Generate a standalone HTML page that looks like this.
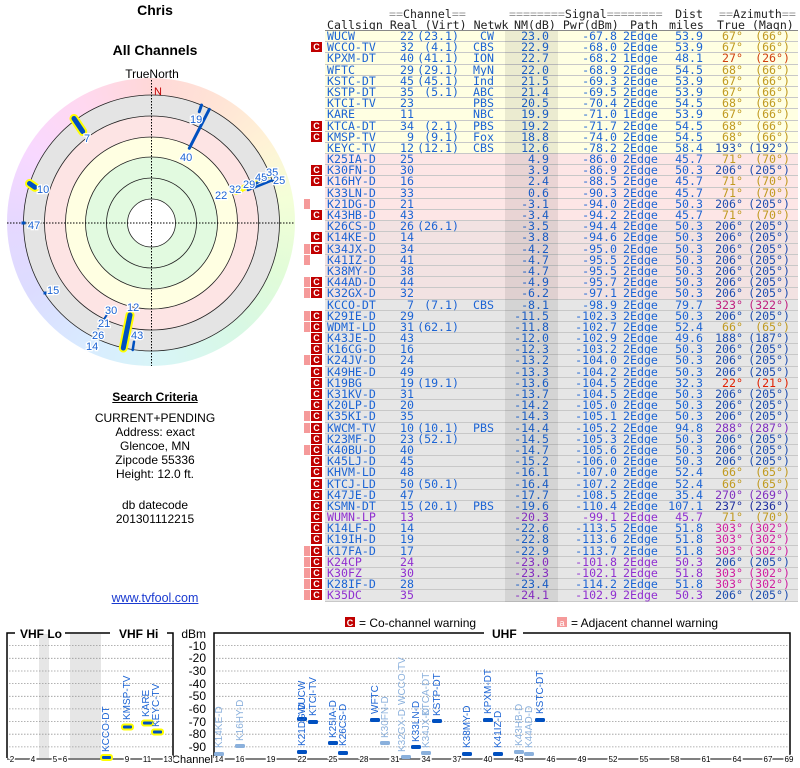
<!DOCTYPE html>
<html><head><meta charset="utf-8">
<style>
body{margin:0;width:800px;height:768px;background:#fff;position:relative;overflow:hidden;font-family:"Liberation Sans","DejaVu Sans",sans-serif}
.lt{position:absolute;left:0;width:310px;text-align:center;color:#000}
#tb{position:absolute;left:325px;top:31px;width:473px;font-family:"DejaVu Sans Mono","Liberation Mono",monospace;font-size:11.6px;color:#1c64d4}
.r{position:relative;height:11.2px;box-sizing:border-box;border-bottom:1px solid #c8c8c8;line-height:11px;white-space:pre}
.r span{position:absolute;top:0}
.Y{background:#ffffe2}.P{background:#fde6e6}.Q{background:#f2e2e2}.G{background:#e6e6e6}
.a{left:2px}.b{left:41px;width:48px;text-align:right}.v{left:90px;width:44px;text-align:right}
.n{left:140px;width:29px;text-align:right}.m{left:170px;width:54px;text-align:right}
.p{left:232px;width:60px;text-align:right}.h{left:298px}.d{left:334px;width:44px;text-align:right}
.t{left:384px;width:34px;text-align:right}.g2{left:420px;width:45px;text-align:right}
.C{position:absolute;left:-14px;top:0px;width:11px;height:10px;background:#c00000;color:#fff;font:bold 9px/10px "Liberation Sans",sans-serif;text-align:center}
.A{position:absolute;left:-21px;top:0px;width:6px;height:10px;background:#f59a9a;overflow:hidden}
.go{color:#c09a20}.rd{color:#d04010}.nb{color:#1f4fb0}.mg{color:#c0207f}.pu{color:#8030c0}.nv{color:#2030a0}.pk{color:#d020a0}.rr{color:#e02000}.vi{color:#9030d0}
#hd{position:absolute;left:325px;top:9px;font-family:"DejaVu Sans Mono","Liberation Mono",monospace;font-size:11.6px;color:#222;white-space:pre;line-height:11px}
#hd span{position:absolute}
.e{color:#999}
</style></head><body>

<div class="lt" style="top:2px;font-weight:bold;font-size:14px">Chris</div>
<div class="lt" style="top:42px;font-weight:bold;font-size:14px">All Channels</div>
<div class="lt" style="top:67px;font-size:12px;left:-3px">TrueNorth</div>

<div style="position:absolute;left:7px;top:78px;width:288px;height:288px;border-radius:50%;background:conic-gradient(#ffd8d8 0deg,#ffe4d6 30deg,#fff2d6 55deg,#f4ffd8 80deg,#e2fcd8 110deg,#d8f8e4 140deg,#d8f6f6 175deg,#d8ecff 205deg,#dcdcff 240deg,#e6d8ff 270deg,#f8d8ff 300deg,#ffd8f0 330deg,#ffd8d8 360deg)"></div>
<svg style="position:absolute;left:0;top:0" width="310" height="380">
<circle cx="151.5" cy="223" r="128" fill="#e4e4e4" stroke="#222" stroke-width="0.8"/>
<circle cx="151.5" cy="223" r="107" fill="#fde4e4" stroke="#222" stroke-width="0.8"/>
<circle cx="151.5" cy="223" r="86" fill="#ffffe2" stroke="#222" stroke-width="0.8"/>
<circle cx="151.5" cy="223" r="66" fill="#e2fae0" stroke="#222" stroke-width="0.8"/>
<circle cx="151.5" cy="223" r="45" fill="#e2fae0" stroke="#222" stroke-width="0.8"/>
<circle cx="151.5" cy="223" r="24" fill="#fff" stroke="#222" stroke-width="0.8"/>
<line x1="7" y1="223" x2="295" y2="223" stroke="#000" stroke-width="1" stroke-dasharray="1.5,1.5"/>
<line x1="151.5" y1="80" x2="151.5" y2="366" stroke="#000" stroke-width="1" stroke-dasharray="1.5,1.5"/>
<text x="158" y="95" font-size="11" fill="#c00000" text-anchor="middle">N</text>
<g stroke-linecap="round">
<line x1="74" y1="118.5" x2="82.7" y2="131.5" stroke="#ff0" stroke-width="9"/>
<line x1="74" y1="118.5" x2="82.7" y2="131.5" stroke="#0050c0" stroke-width="5"/>
<line x1="29.5" y1="183.5" x2="35" y2="187.3" stroke="#ff0" stroke-width="9"/>
<line x1="29.5" y1="183.5" x2="35" y2="187.3" stroke="#0050c0" stroke-width="5"/>
<line x1="130" y1="315" x2="123.3" y2="348" stroke="#ff0" stroke-width="9"/>
<line x1="130" y1="315" x2="123.3" y2="348" stroke="#0050c0" stroke-width="5"/>
<line x1="236" y1="192" x2="270" y2="174" stroke="#ff0" stroke-width="6"/>
<line x1="248" y1="190" x2="273" y2="180" stroke="#0050c0" stroke-width="2.5"/>
<line x1="255" y1="184" x2="272" y2="174" stroke="#0050c0" stroke-width="2.5"/>
<line x1="189.3" y1="148.3" x2="209.3" y2="109.3" stroke="#0050c0" stroke-width="3"/>
<line x1="199.3" y1="111.7" x2="201.5" y2="105" stroke="#0050c0" stroke-width="3"/>
<line x1="134" y1="341.7" x2="132.7" y2="350" stroke="#0050c0" stroke-width="2.5"/>
<line x1="106.7" y1="315" x2="98.3" y2="328.3" stroke="#0050c0" stroke-width="2"/>
<rect x="21.5" y="221.5" width="4" height="3" fill="#0050c0"/>
<rect x="43.5" y="291.5" width="3" height="3" fill="#0050c0"/>
</g>
<g font-size="11" fill="#1c64d4" stroke="#fff" stroke-width="2.5" paint-order="stroke">
<text x="190" y="123">19</text><text x="180" y="161">40</text><text x="84" y="142">7</text>
<text x="37" y="193">10</text><text x="28" y="229">47</text><text x="47" y="294">15</text>
<text x="215" y="199">22</text><text x="229" y="193">32</text><text x="243" y="188">29</text>
<text x="255" y="181">45</text><text x="266" y="176">35</text><text x="273" y="184">25</text>
<text x="127" y="311">12</text><text x="131" y="339">43</text><text x="105" y="314">30</text>
<text x="98" y="327">21</text><text x="92" y="339">26</text><text x="86" y="350">14</text>
</g>
</svg>

<div class="lt" style="top:390px;font-weight:bold;font-size:12px;text-decoration:underline">Search Criteria</div>
<div class="lt" style="top:411px;font-size:12px;line-height:14px">CURRENT+PENDING<br>Address: exact<br>Glencoe, MN<br>Zipcode 55336<br>Height: 12.0 ft.</div>
<div class="lt" style="top:498px;font-size:12px;line-height:14px">db datecode<br>201301112215</div>
<div class="lt" style="top:591px;font-size:12.5px;color:#1a3ad0;text-decoration:underline">www.tvfool.com</div>

<div id="hd">
<span style="left:64px;top:0"><i class="e" style="font-style:normal">==</i>Channel<i class="e" style="font-style:normal">==</i></span>
<span style="left:184px;top:0"><i class="e" style="font-style:normal">========</i>Signal<i class="e" style="font-style:normal">========</i></span>
<span style="left:344px;top:0;width:34px;text-align:right">Dist</span>
<span style="left:394px;top:0"><i class="e" style="font-style:normal">==</i>Azimuth<i class="e" style="font-style:normal">==</i></span>
<span style="left:2px;top:11px">Callsign Real (Virt) Netwk</span>
<span style="left:189px;top:11px">NM(dB) Pwr(dBm)</span>
<span style="left:305px;top:11px">Path</span>
<span style="left:344px;top:11px">miles</span>
<span style="left:392px;top:11px">True (Magn)</span>
</div>
<div style="position:absolute;left:325px;top:30px;width:473px;height:1px;background:#888"></div>
<div style="position:absolute;left:505px;top:31px;width:53px;height:571px;background:rgba(0,0,0,0.08);z-index:2"></div>

<div id="tb">
<div class="r Y"><span class="a">WUCW</span><span class="b">22</span><span class="v">(23.1)</span><span class="n">CW</span><span class="m">23.0</span><span class="p">-67.8</span><span class="h">2Edge</span><span class="d">53.9</span><span class="t go">67°</span><span class="g2 go">(66°)</span></div>
<div class="r Y"><i class="C">C</i><span class="a">WCCO-TV</span><span class="b">32</span><span class="v">(4.1)</span><span class="n">CBS</span><span class="m">22.9</span><span class="p">-68.0</span><span class="h">2Edge</span><span class="d">53.9</span><span class="t go">67°</span><span class="g2 go">(66°)</span></div>
<div class="r Y"><span class="a">KPXM-DT</span><span class="b">40</span><span class="v">(41.1)</span><span class="n">ION</span><span class="m">22.7</span><span class="p">-68.2</span><span class="h">1Edge</span><span class="d">48.1</span><span class="t rd">27°</span><span class="g2 rd">(26°)</span></div>
<div class="r Y"><span class="a">WFTC</span><span class="b">29</span><span class="v">(29.1)</span><span class="n">MyN</span><span class="m">22.0</span><span class="p">-68.9</span><span class="h">2Edge</span><span class="d">54.5</span><span class="t go">68°</span><span class="g2 go">(66°)</span></div>
<div class="r Y"><span class="a">KSTC-DT</span><span class="b">45</span><span class="v">(45.1)</span><span class="n">Ind</span><span class="m">21.5</span><span class="p">-69.3</span><span class="h">2Edge</span><span class="d">53.9</span><span class="t go">67°</span><span class="g2 go">(66°)</span></div>
<div class="r Y"><span class="a">KSTP-DT</span><span class="b">35</span><span class="v">(5.1)</span><span class="n">ABC</span><span class="m">21.4</span><span class="p">-69.5</span><span class="h">2Edge</span><span class="d">53.9</span><span class="t go">67°</span><span class="g2 go">(66°)</span></div>
<div class="r Y"><span class="a">KTCI-TV</span><span class="b">23</span><span class="n">PBS</span><span class="m">20.5</span><span class="p">-70.4</span><span class="h">2Edge</span><span class="d">54.5</span><span class="t go">68°</span><span class="g2 go">(66°)</span></div>
<div class="r Y"><span class="a">KARE</span><span class="b">11</span><span class="n">NBC</span><span class="m">19.9</span><span class="p">-71.0</span><span class="h">1Edge</span><span class="d">53.9</span><span class="t go">67°</span><span class="g2 go">(66°)</span></div>
<div class="r Y"><i class="C">C</i><span class="a">KTCA-DT</span><span class="b">34</span><span class="v">(2.1)</span><span class="n">PBS</span><span class="m">19.2</span><span class="p">-71.7</span><span class="h">2Edge</span><span class="d">54.5</span><span class="t go">68°</span><span class="g2 go">(66°)</span></div>
<div class="r Y"><i class="C">C</i><span class="a">KMSP-TV</span><span class="b">9</span><span class="v">(9.1)</span><span class="n">Fox</span><span class="m">18.8</span><span class="p">-74.0</span><span class="h">2Edge</span><span class="d">54.5</span><span class="t go">68°</span><span class="g2 go">(66°)</span></div>
<div class="r Y"><span class="a">KEYC-TV</span><span class="b">12</span><span class="v">(12.1)</span><span class="n">CBS</span><span class="m">12.6</span><span class="p">-78.2</span><span class="h">2Edge</span><span class="d">58.4</span><span class="t nb">193°</span><span class="g2 nb">(192°)</span></div>
<div class="r P"><span class="a">K25IA-D</span><span class="b">25</span><span class="m">4.9</span><span class="p">-86.0</span><span class="h">2Edge</span><span class="d">45.7</span><span class="t go">71°</span><span class="g2 go">(70°)</span></div>
<div class="r P"><i class="C">C</i><span class="a">K30FN-D</span><span class="b">30</span><span class="m">3.9</span><span class="p">-86.9</span><span class="h">2Edge</span><span class="d">50.3</span><span class="t nb">206°</span><span class="g2 nb">(205°)</span></div>
<div class="r P"><i class="C">C</i><span class="a">K16HY-D</span><span class="b">16</span><span class="m">2.4</span><span class="p">-88.5</span><span class="h">2Edge</span><span class="d">45.7</span><span class="t go">71°</span><span class="g2 go">(70°)</span></div>
<div class="r P"><span class="a">K33LN-D</span><span class="b">33</span><span class="m">0.6</span><span class="p">-90.3</span><span class="h">2Edge</span><span class="d">45.7</span><span class="t go">71°</span><span class="g2 go">(70°)</span></div>
<div class="r P"><i class="A"></i><span class="a">K21DG-D</span><span class="b">21</span><span class="m">-3.1</span><span class="p">-94.0</span><span class="h">2Edge</span><span class="d">50.3</span><span class="t nb">206°</span><span class="g2 nb">(205°)</span></div>
<div class="r P"><i class="C">C</i><span class="a">K43HB-D</span><span class="b">43</span><span class="m">-3.4</span><span class="p">-94.2</span><span class="h">2Edge</span><span class="d">45.7</span><span class="t go">71°</span><span class="g2 go">(70°)</span></div>
<div class="r Q"><span class="a">K26CS-D</span><span class="b">26</span><span class="v">(26.1)</span><span class="m">-3.5</span><span class="p">-94.4</span><span class="h">2Edge</span><span class="d">50.3</span><span class="t nb">206°</span><span class="g2 nb">(205°)</span></div>
<div class="r Q"><i class="C">C</i><span class="a">K14KE-D</span><span class="b">14</span><span class="m">-3.8</span><span class="p">-94.6</span><span class="h">2Edge</span><span class="d">50.3</span><span class="t nb">206°</span><span class="g2 nb">(205°)</span></div>
<div class="r Q"><i class="A"></i><i class="C">C</i><span class="a">K34JX-D</span><span class="b">34</span><span class="m">-4.2</span><span class="p">-95.0</span><span class="h">2Edge</span><span class="d">50.3</span><span class="t nb">206°</span><span class="g2 nb">(205°)</span></div>
<div class="r Q"><i class="A"></i><span class="a">K41IZ-D</span><span class="b">41</span><span class="m">-4.7</span><span class="p">-95.5</span><span class="h">2Edge</span><span class="d">50.3</span><span class="t nb">206°</span><span class="g2 nb">(205°)</span></div>
<div class="r Q"><span class="a">K38MY-D</span><span class="b">38</span><span class="m">-4.7</span><span class="p">-95.5</span><span class="h">2Edge</span><span class="d">50.3</span><span class="t nb">206°</span><span class="g2 nb">(205°)</span></div>
<div class="r Q"><i class="A"></i><i class="C">C</i><span class="a">K44AD-D</span><span class="b">44</span><span class="m">-4.9</span><span class="p">-95.7</span><span class="h">2Edge</span><span class="d">50.3</span><span class="t nb">206°</span><span class="g2 nb">(205°)</span></div>
<div class="r Q"><i class="A"></i><i class="C">C</i><span class="a">K32GX-D</span><span class="b">32</span><span class="m">-6.2</span><span class="p">-97.1</span><span class="h">2Edge</span><span class="d">50.3</span><span class="t nb">206°</span><span class="g2 nb">(205°)</span></div>
<div class="r G"><span class="a">KCCO-DT</span><span class="b">7</span><span class="v">(7.1)</span><span class="n">CBS</span><span class="m">-8.1</span><span class="p">-98.9</span><span class="h">2Edge</span><span class="d">79.7</span><span class="t mg">323°</span><span class="g2 mg">(322°)</span></div>
<div class="r G"><i class="A"></i><i class="C">C</i><span class="a">K29IE-D</span><span class="b">29</span><span class="m">-11.5</span><span class="p">-102.3</span><span class="h">2Edge</span><span class="d">50.3</span><span class="t nb">206°</span><span class="g2 nb">(205°)</span></div>
<div class="r G"><i class="A"></i><i class="C">C</i><span class="a">WDMI-LD</span><span class="b">31</span><span class="v">(62.1)</span><span class="m">-11.8</span><span class="p">-102.7</span><span class="h">2Edge</span><span class="d">52.4</span><span class="t go">66°</span><span class="g2 go">(65°)</span></div>
<div class="r G"><i class="C">C</i><span class="a">K43JE-D</span><span class="b">43</span><span class="m">-12.0</span><span class="p">-102.9</span><span class="h">2Edge</span><span class="d">49.6</span><span class="t nb">188°</span><span class="g2 nb">(187°)</span></div>
<div class="r G"><i class="C">C</i><span class="a">K16CG-D</span><span class="b">16</span><span class="m">-12.3</span><span class="p">-103.2</span><span class="h">2Edge</span><span class="d">50.3</span><span class="t nb">206°</span><span class="g2 nb">(205°)</span></div>
<div class="r G"><i class="A"></i><i class="C">C</i><span class="a">K24JV-D</span><span class="b">24</span><span class="m">-13.2</span><span class="p">-104.0</span><span class="h">2Edge</span><span class="d">50.3</span><span class="t nb">206°</span><span class="g2 nb">(205°)</span></div>
<div class="r G"><i class="C">C</i><span class="a">K49HE-D</span><span class="b">49</span><span class="m">-13.3</span><span class="p">-104.2</span><span class="h">2Edge</span><span class="d">50.3</span><span class="t nb">206°</span><span class="g2 nb">(205°)</span></div>
<div class="r G"><i class="C">C</i><span class="a">K19BG</span><span class="b">19</span><span class="v">(19.1)</span><span class="m">-13.6</span><span class="p">-104.5</span><span class="h">2Edge</span><span class="d">32.3</span><span class="t rr">22°</span><span class="g2 rr">(21°)</span></div>
<div class="r G"><i class="C">C</i><span class="a">K31KV-D</span><span class="b">31</span><span class="m">-13.7</span><span class="p">-104.5</span><span class="h">2Edge</span><span class="d">50.3</span><span class="t nb">206°</span><span class="g2 nb">(205°)</span></div>
<div class="r G"><i class="C">C</i><span class="a">K20LP-D</span><span class="b">20</span><span class="m">-14.2</span><span class="p">-105.0</span><span class="h">2Edge</span><span class="d">50.3</span><span class="t nb">206°</span><span class="g2 nb">(205°)</span></div>
<div class="r G"><i class="A"></i><i class="C">C</i><span class="a">K35KI-D</span><span class="b">35</span><span class="m">-14.3</span><span class="p">-105.1</span><span class="h">2Edge</span><span class="d">50.3</span><span class="t nb">206°</span><span class="g2 nb">(205°)</span></div>
<div class="r G"><i class="A"></i><i class="C">C</i><span class="a">KWCM-TV</span><span class="b">10</span><span class="v">(10.1)</span><span class="n">PBS</span><span class="m">-14.4</span><span class="p">-105.2</span><span class="h">2Edge</span><span class="d">94.8</span><span class="t pu">288°</span><span class="g2 pu">(287°)</span></div>
<div class="r G"><i class="C">C</i><span class="a">K23MF-D</span><span class="b">23</span><span class="v">(52.1)</span><span class="m">-14.5</span><span class="p">-105.3</span><span class="h">2Edge</span><span class="d">50.3</span><span class="t nb">206°</span><span class="g2 nb">(205°)</span></div>
<div class="r G"><i class="A"></i><i class="C">C</i><span class="a">K40BU-D</span><span class="b">40</span><span class="m">-14.7</span><span class="p">-105.6</span><span class="h">2Edge</span><span class="d">50.3</span><span class="t nb">206°</span><span class="g2 nb">(205°)</span></div>
<div class="r G"><i class="C">C</i><span class="a">K45LJ-D</span><span class="b">45</span><span class="m">-15.2</span><span class="p">-106.0</span><span class="h">2Edge</span><span class="d">50.3</span><span class="t nb">206°</span><span class="g2 nb">(205°)</span></div>
<div class="r G"><i class="C">C</i><span class="a">KHVM-LD</span><span class="b">48</span><span class="m">-16.1</span><span class="p">-107.0</span><span class="h">2Edge</span><span class="d">52.4</span><span class="t go">66°</span><span class="g2 go">(65°)</span></div>
<div class="r G"><i class="C">C</i><span class="a">KTCJ-LD</span><span class="b">50</span><span class="v">(50.1)</span><span class="m">-16.4</span><span class="p">-107.2</span><span class="h">2Edge</span><span class="d">52.4</span><span class="t go">66°</span><span class="g2 go">(65°)</span></div>
<div class="r G"><i class="C">C</i><span class="a">K47JE-D</span><span class="b">47</span><span class="m">-17.7</span><span class="p">-108.5</span><span class="h">2Edge</span><span class="d">35.4</span><span class="t pu">270°</span><span class="g2 pu">(269°)</span></div>
<div class="r G"><i class="C">C</i><span class="a">KSMN-DT</span><span class="b">15</span><span class="v">(20.1)</span><span class="n">PBS</span><span class="m">-19.6</span><span class="p">-110.4</span><span class="h">2Edge</span><span class="d">107.1</span><span class="t nv">237°</span><span class="g2 nv">(236°)</span></div>
<div class="r G"><i class="C">C</i><span class="a vi">WUMN-LP</span><span class="b vi">13</span><span class="m vi">-20.3</span><span class="p vi">-99.1</span><span class="h vi">2Edge</span><span class="d vi">45.7</span><span class="t go">71°</span><span class="g2 go">(70°)</span></div>
<div class="r G"><i class="C">C</i><span class="a">K14LF-D</span><span class="b">14</span><span class="m">-22.6</span><span class="p">-113.5</span><span class="h">2Edge</span><span class="d">51.8</span><span class="t pk">303°</span><span class="g2 pk">(302°)</span></div>
<div class="r G"><i class="C">C</i><span class="a">K19IH-D</span><span class="b">19</span><span class="m">-22.8</span><span class="p">-113.6</span><span class="h">2Edge</span><span class="d">51.8</span><span class="t pk">303°</span><span class="g2 pk">(302°)</span></div>
<div class="r G"><i class="A"></i><i class="C">C</i><span class="a">K17FA-D</span><span class="b">17</span><span class="m">-22.9</span><span class="p">-113.7</span><span class="h">2Edge</span><span class="d">51.8</span><span class="t pk">303°</span><span class="g2 pk">(302°)</span></div>
<div class="r G"><i class="A"></i><i class="C">C</i><span class="a vi">K24CP</span><span class="b vi">24</span><span class="m vi">-23.0</span><span class="p vi">-101.8</span><span class="h vi">2Edge</span><span class="d vi">50.3</span><span class="t nb">206°</span><span class="g2 nb">(205°)</span></div>
<div class="r G"><i class="A"></i><i class="C">C</i><span class="a vi">K30FZ</span><span class="b vi">30</span><span class="m vi">-23.3</span><span class="p vi">-102.1</span><span class="h vi">2Edge</span><span class="d vi">51.8</span><span class="t pk">303°</span><span class="g2 pk">(302°)</span></div>
<div class="r G"><i class="A"></i><i class="C">C</i><span class="a">K28IF-D</span><span class="b">28</span><span class="m">-23.4</span><span class="p">-114.2</span><span class="h">2Edge</span><span class="d">51.8</span><span class="t pk">303°</span><span class="g2 pk">(302°)</span></div>
<div class="r G"><i class="A"></i><i class="C">C</i><span class="a vi">K35DC</span><span class="b vi">35</span><span class="m vi">-24.1</span><span class="p vi">-102.9</span><span class="h vi">2Edge</span><span class="d vi">50.3</span><span class="t nb">206°</span><span class="g2 nb">(205°)</span></div>
</div>

<svg style="position:absolute;left:0;top:608px" width="800" height="160" viewBox="0 608 800 160" font-family="Liberation Sans, DejaVu Sans, sans-serif">
<rect x="345" y="617" width="10" height="10" fill="#c00000"/><text x="350" y="626" font-size="9" fill="#fff" text-anchor="middle" font-weight="bold">C</text>
<text x="359" y="627" font-size="12">= Co-channel warning</text>
<rect x="557" y="617" width="10" height="10" fill="#f59a9a"/><text x="562" y="626" font-size="9" fill="#fff" text-anchor="middle">a</text>
<text x="571" y="627" font-size="12">= Adjacent channel warning</text>
<rect x="39" y="634" width="10" height="124" fill="#e6e6e6"/>
<rect x="70" y="634" width="31" height="124" fill="#e6e6e6"/>
<g stroke="#000" stroke-width="1.5" fill="none">
<path d="M15 633H7V758"/><path d="M65 633H110"/><path d="M167 633H173V758"/>
<path d="M484 633H214V758"/><path d="M523 633H790V758"/>
</g>
<g stroke="#999" stroke-width="0.8" stroke-dasharray="1.5,1.5">
<path d="M9 645.6H172M9 658.3H172M9 671H172M9 683.6H172M9 696.3H172M9 708.9H172M9 721.6H172M9 734.2H172M9 746.9H172"/>
<path d="M216 645.6H789M216 658.3H789M216 671H789M216 683.6H789M216 696.3H789M216 708.9H789M216 721.6H789M216 734.2H789M216 746.9H789"/>
</g>
<text x="20" y="638" font-size="12" font-weight="bold">VHF Lo</text>
<text x="119" y="638" font-size="12" font-weight="bold">VHF Hi</text>
<text x="492" y="638" font-size="12" font-weight="bold">UHF</text>
<g font-size="12" text-anchor="end">
<text x="206" y="638">dBm</text><text x="206" y="650">-10</text><text x="206" y="662">-20</text><text x="206" y="675">-30</text><text x="206" y="688">-40</text><text x="206" y="700">-50</text><text x="206" y="713">-60</text><text x="206" y="726">-70</text><text x="206" y="738">-80</text><text x="206" y="751">-90</text>
</g>
<text x="213" y="763" font-size="11" text-anchor="end">Channel</text>
<line x1="7" y1="759" x2="173" y2="759" stroke="#000" stroke-width="1"/>
<line x1="214" y1="759" x2="790" y2="759" stroke="#000" stroke-width="1"/>
<g font-size="8" text-anchor="middle" stroke="#fff" stroke-width="3" paint-order="stroke">
<text x="12" y="762">2</text><text x="33" y="762">4</text><text x="55" y="762">5</text><text x="65" y="762">6</text><text x="127" y="762">9</text><text x="147" y="762">11</text><text x="168" y="762">13</text>
<text x="219" y="762">14</text><text x="240" y="762">16</text><text x="271" y="762">19</text><text x="302" y="762">22</text><text x="333" y="762">25</text><text x="364" y="762">28</text><text x="395" y="762">31</text><text x="426" y="762">34</text><text x="457" y="762">37</text><text x="488" y="762">40</text><text x="519" y="762">43</text><text x="551" y="762">46</text><text x="582" y="762">49</text><text x="613" y="762">52</text><text x="644" y="762">55</text><text x="675" y="762">58</text><text x="706" y="762">61</text><text x="737" y="762">64</text><text x="768" y="762">67</text><text x="789" y="762">69</text>
</g>
<g>
<rect x="101" y="755" width="11" height="5" rx="2" fill="#0050c0" stroke="#ff0" stroke-width="2"/>
<rect x="122" y="724.5" width="11" height="5" rx="2" fill="#0050c0" stroke="#ff0" stroke-width="2"/>
<rect x="142" y="720.5" width="11" height="5" rx="2" fill="#0050c0" stroke="#ff0" stroke-width="2"/>
<rect x="152" y="729.5" width="11" height="5" rx="2" fill="#0050c0" stroke="#ff0" stroke-width="2"/>
</g>
<g font-size="10" fill="#1c64d4">
<text transform="translate(109,752) rotate(-90)">KCCO-DT</text>
<text transform="translate(130,720) rotate(-90)">KMSP-TV</text>
<text transform="translate(149,717) rotate(-90)">KARE</text>
<text transform="translate(159,727) rotate(-90)">KEYC-TV</text>
</g>
<g fill="#0050c0">
<rect x="297" y="750" width="10" height="4" rx="1.5"/><rect x="297" y="717" width="10" height="4" rx="1.5"/><rect x="308" y="720" width="10" height="4" rx="1.5"/>
<rect x="328" y="741" width="10" height="4" rx="1.5"/><rect x="338" y="751" width="10" height="4" rx="1.5"/><rect x="370" y="718" width="10" height="4" rx="1.5"/>
<rect x="411" y="745" width="10" height="4" rx="1.5"/><rect x="432" y="719" width="10" height="4" rx="1.5"/><rect x="462" y="752" width="10" height="4" rx="1.5"/>
<rect x="483" y="718" width="10" height="4" rx="1.5"/><rect x="493" y="752" width="10" height="4" rx="1.5"/><rect x="535" y="718" width="10" height="4" rx="1.5"/>
</g>
<g fill="#8ab0dc">
<rect x="214" y="752" width="10" height="4" rx="1.5"/><rect x="235" y="744" width="10" height="4" rx="1.5"/><rect x="380" y="741" width="10" height="4" rx="1.5"/>
<rect x="401" y="755" width="10" height="4" rx="1.5"/><rect x="421" y="751" width="10" height="4" rx="1.5"/><rect x="514" y="750" width="10" height="4" rx="1.5"/><rect x="524" y="752" width="10" height="4" rx="1.5"/>
</g>
<g font-size="10" fill="#1c64d4">
<text transform="translate(305,746) rotate(-90)">K21DG-D</text>
<text transform="translate(305,714) rotate(-90)">WUCW</text>
<text transform="translate(316,716) rotate(-90)">KTCI-TV</text>
<text transform="translate(336,738) rotate(-90)">K25IA-D</text>
<text transform="translate(346,746) rotate(-90)">K26CS-D</text>
<text transform="translate(378,714) rotate(-90)">WFTC</text>
<text transform="translate(419,742) rotate(-90)">K33LN-D</text>
<text transform="translate(440,716) rotate(-90)">KSTP-DT</text>
<text transform="translate(470,748) rotate(-90)">K38MY-D</text>
<text transform="translate(491,714) rotate(-90)">KPXM-DT</text>
<text transform="translate(501,748) rotate(-90)">K41IZ-D</text>
<text transform="translate(543,714) rotate(-90)">KSTC-DT</text>
</g>
<g font-size="10" fill="#8ab0dc">
<text transform="translate(222,748) rotate(-90)">K14KE-D</text>
<text transform="translate(243,741) rotate(-90)">K16HY-D</text>
<text transform="translate(388,738) rotate(-90)">K30FN-D</text>
<text transform="translate(405,752) rotate(-90)">K32GX-D</text>
<text transform="translate(405,705) rotate(-90)">WCCO-TV</text>
<text transform="translate(429,748) rotate(-90)">K34JX-D</text>
<text transform="translate(429,716) rotate(-90)">KTCA-DT</text>
<text transform="translate(522,746) rotate(-90)">K43HB-D</text>
<text transform="translate(532,748) rotate(-90)">K44AD-D</text>
</g>
</svg>
</body></html>
